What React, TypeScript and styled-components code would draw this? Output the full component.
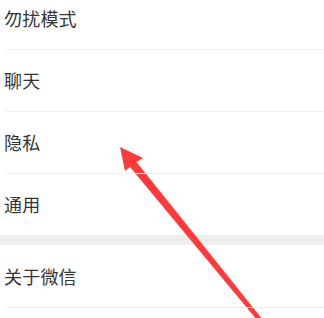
import React from "react";
import styled, { createGlobalStyle } from "styled-components";

const Global = createGlobalStyle`
  html, body { margin: 0; padding: 0; background: #ffffff; }
  body { width: 324px; height: 318px; overflow: hidden; }
  #root { width: 324px; height: 318px; }
`;

const Page = styled.div`
  position: relative;
  width: 324px;
  height: 318px;
  overflow: hidden;
  background: #ffffff;
  font-family: "Noto Sans CJK SC", "Noto Sans", sans-serif;
`;

const List = styled.div`
  display: flex;
  flex-direction: column;
  margin-top: -13px;
`;

const Section = styled.div`
  display: flex;
  flex-direction: column;
  background: #ffffff;
`;

const Gap = styled.div`
  height: 10px;
  background: #ededed;
`;

const Row = styled.div<{ $divider?: boolean }>`
  height: 62px;
  box-sizing: border-box;
  display: flex;
  align-items: center;
  padding-left: 4px;
  position: relative;
  font-size: 18px;
  color: #353535;
  letter-spacing: 0.2px;
  &::after {
    content: "";
    display: ${(p) => (p.$divider ? "block" : "none")};
    position: absolute;
    left: 4px;
    right: 0;
    bottom: -1px;
    height: 1px;
    background: #f0f0f0;
    z-index: 1;
  }
`;

const Arrow = styled.svg`
  position: absolute;
  left: 0;
  top: 0;
  width: 324px;
  height: 318px;
  pointer-events: none;
`;

const sections: { label: string; divider: boolean }[][] = [
  [
    { label: "勿扰模式", divider: true },
    { label: "聊天", divider: true },
    { label: "隐私", divider: true },
    { label: "通用", divider: false },
  ],
  [{ label: "关于微信", divider: true }],
];

export default function App() {
  return (
    <Page>
      <Global />
      <List>
        {sections.map((sec, i) => (
          <React.Fragment key={i}>
            {i > 0 && <Gap />}
            <Section>
              {sec.map((r) => (
                <Row key={r.label} $divider={r.divider}>
                  {r.label}
                </Row>
              ))}
            </Section>
          </React.Fragment>
        ))}
      </List>
      <Arrow viewBox="0 0 324 318">
        <polygon
          points="120,147 143,158 136.5,162 263,320 257,320 130,167 125,171"
          fill="#fe3a3a"
        />
      </Arrow>
    </Page>
  );
}
